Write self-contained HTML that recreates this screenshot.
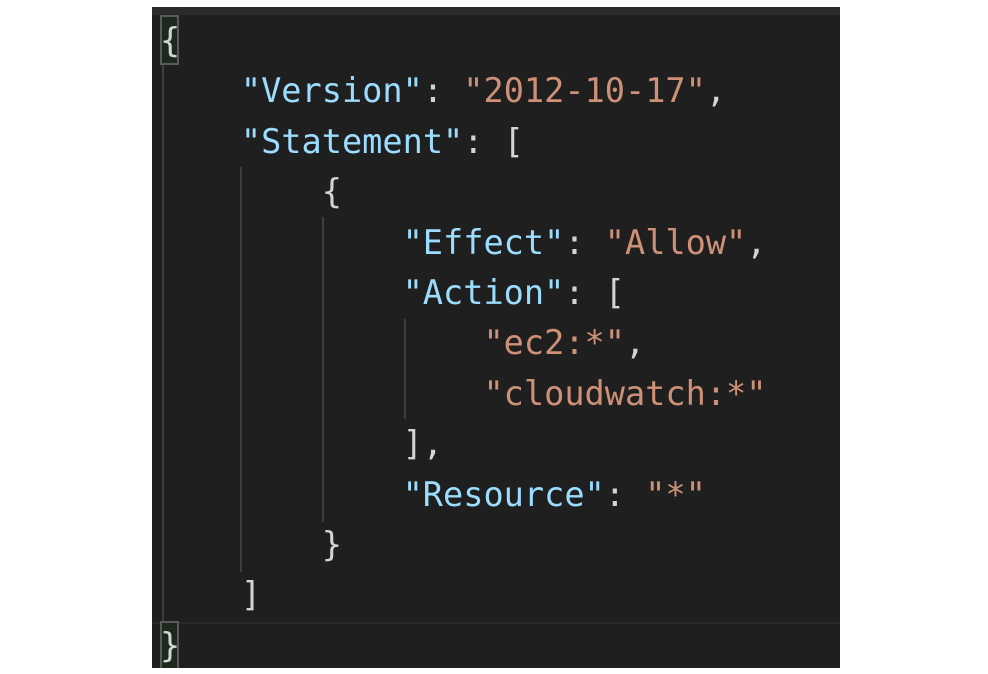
<!DOCTYPE html>
<html><head><style>
body{margin:0;background:#fff;width:988px;height:674px;position:relative;overflow:hidden}
#p{position:absolute;left:152px;top:7px;width:688px;height:661px;background:#1f1f1f;overflow:hidden}
.top{position:absolute;left:0;top:0;width:688px;height:8px;background:#2b2b2b}
.cur{position:absolute;left:0;top:615px;width:688px;height:50px;border-top:2px solid #2a2a2a;box-sizing:border-box}
.g{position:absolute;width:2px;background:#3e3e3e}
.bx{position:absolute;width:19px;height:50px;background:#1b2a1c;border:2px solid #5a5a5a;box-sizing:border-box}
pre{position:absolute;left:8px;top:9px;margin:0;font-family:"DejaVu Sans Mono","Liberation Mono",monospace;font-size:33.6px;line-height:50.4px;color:#d4d4d4}
.k{color:#9cdcfe}.s{color:#ce9178}
</style></head><body>
<div id="p">
<div class="top"></div>
<div class="cur"></div>
<div class="g" style="left:10px;top:58px;height:556px"></div>
<div class="g" style="left:88px;top:160px;height:405px"></div>
<div class="g" style="left:170px;top:210px;height:305px"></div>
<div class="g" style="left:252px;top:312px;height:100px"></div>
<div class="bx" style="left:8px;top:8px"></div>
<div class="bx" style="left:8px;top:614px"></div>
<pre>{
    <span class="k">"Version"</span>: <span class="s">"2012-10-17"</span>,
    <span class="k">"Statement"</span>: [
        {
            <span class="k">"Effect"</span>: <span class="s">"Allow"</span>,
            <span class="k">"Action"</span>: [
                <span class="s">"ec2:*"</span>,
                <span class="s">"cloudwatch:*"</span>
            ],
            <span class="k">"Resource"</span>: <span class="s">"*"</span>
        }
    ]
}</pre>
</div>
</body></html>
